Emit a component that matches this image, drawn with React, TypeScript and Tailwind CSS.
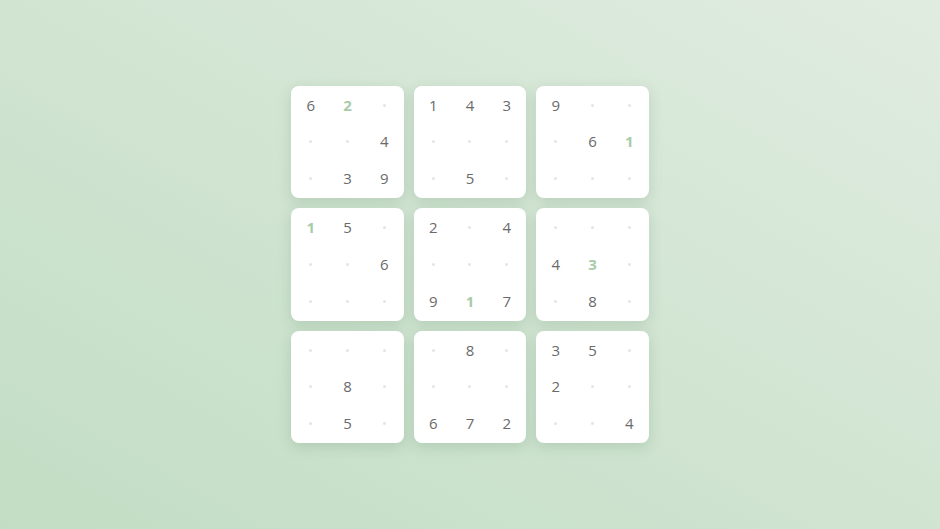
// 0 = empty cell, negative = hint digit (green)
const BOXES: number[][] = [
  [6, -2, 0, 0, 0, 4, 0, 3, 9],
  [1, 4, 3, 0, 0, 0, 0, 5, 0],
  [9, 0, 0, 0, 6, -1, 0, 0, 0],
  [-1, 5, 0, 0, 0, 6, 0, 0, 0],
  [2, 0, 4, 0, 0, 0, 9, -1, 7],
  [0, 0, 0, 4, -3, 0, 0, 8, 0],
  [0, 0, 0, 0, 8, 0, 0, 5, 0],
  [0, 8, 0, 0, 0, 0, 6, 7, 2],
  [3, 5, 0, 2, 0, 0, 0, 0, 4],
]

export default function App() {
  return (
    <main
      className="w-[940px] h-[529px] flex items-center justify-center bg-gradient-to-tr from-[#c2ddc4] to-[#e0ece0]"
      style={{ fontFamily: '"Open Sans", "Noto Sans", sans-serif' }}
    >
      <div className="grid grid-cols-3 gap-[10px]">
        {BOXES.map((box, i) => (
          <div
            key={i}
            className="w-[112.5px] h-[112.5px] p-[1px] bg-white rounded-lg shadow-[0_4px_14px_rgba(60,110,70,0.18)] grid grid-cols-3 grid-rows-3"
          >
            {box.map((n, j) => (
              <div key={j} className="flex items-center justify-center">
                {n === 0 ? (
                  <span className="w-[3px] h-[3px] rounded-full bg-[#e4e4e4]" />
                ) : n < 0 ? (
                  <span className="text-[15px] font-bold text-[#a8cba9] leading-none">{-n}</span>
                ) : (
                  <span className="text-[15px] text-[#6a6a6a] leading-none">{n}</span>
                )}
              </div>
            ))}
          </div>
        ))}
      </div>
    </main>
  )
}
